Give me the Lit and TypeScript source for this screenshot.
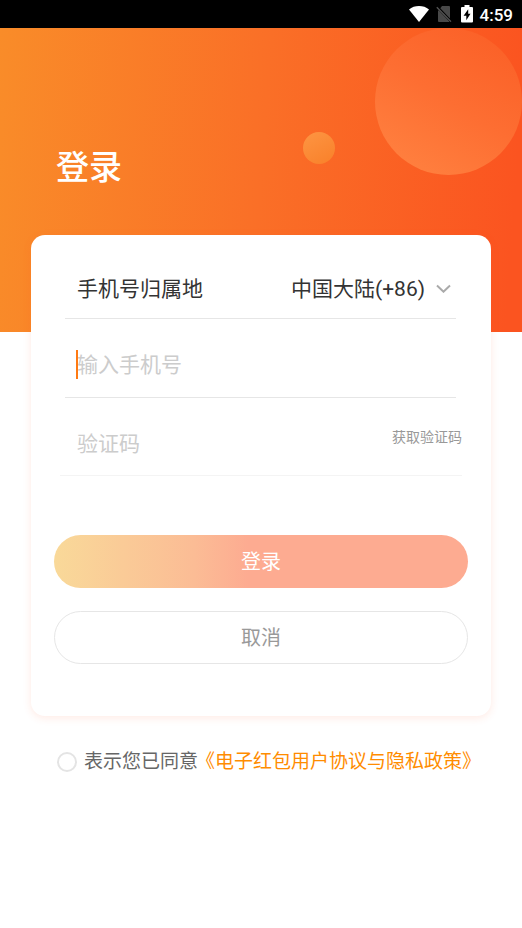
import { LitElement, html, css } from "lit";
import { customElement, state } from "lit/decorators.js";

@customElement("status-bar")
class StatusBar extends LitElement {
  static styles = css`
    :host {
      display: flex;
      align-items: center;
      justify-content: flex-end;
      height: 28px;
      padding-right: 9px;
      background: #000;
      color: #fff;
      font: 500 17px/28px Roboto, sans-serif;
    }
    .wifi {
      margin-right: 7px;
    }
    .sim {
      margin-right: 9px;
    }
    .battery {
      margin-right: 7px;
    }
    .time {
      padding-top: 1px;
    }
  `;

  render() {
    return html`
      <svg class="wifi" width="20" height="16" viewBox="0 0 20 16" aria-hidden="true">
        <path d="M0 3.4C2.8 1.2 6.2 0 10 0s7.2 1.2 10 3.4L10 16z" fill="#fff" />
      </svg>
      <svg class="sim" width="16" height="16" viewBox="0 0 16 16" aria-hidden="true">
        <path d="M6 0h7a1 1 0 0 1 1 1v11.5L4.3 2.2zM2.6 4.2 13.4 15.6 13 16H3a1 1 0 0 1-1-1V5z" fill="#484848" />
        <path d="M.8 1.2 15 15.6" stroke="#555" stroke-width="1.3" />
      </svg>
      <svg class="battery" width="12" height="18" viewBox="0 0 12 18" aria-hidden="true">
        <path d="M3.5 0h5v2H11a1 1 0 0 1 1 1v13.500a1 1 0 0 1-1 1H1a1 1 0 0 1-1-1V3a1 1 0 0 1 1-1h2.500z" fill="#fff" />
        <path d="M7.200 4.200 2.600 10.800h2.700v4.400L9.500 8.700H7.200z" fill="#000" />
      </svg>
      <span class="time">4:59</span>
    `;
  }
}

@customElement("app-root")
class AppRoot extends LitElement {
  @state() private agreed = false;

  static styles = css`
    :host {
      display: block;
      min-height: 100vh;
      background: #fff;
      color: #333;
      font: 21px/32px Roboto, "Noto Sans CJK SC", sans-serif;
    }
    * {
      box-sizing: border-box;
    }
    input,
    select,
    button {
      margin: 0;
      padding: 0;
      border: 0;
      background: none;
      color: inherit;
      font: inherit;
      outline: none;
    }
    button {
      cursor: pointer;
    }
    .hero {
      position: relative;
      height: 304px;
      padding: 116px 56px 0;
      overflow: hidden;
      background: linear-gradient(94deg, #f98c29, #fa6f27 50%, #fb5420 97%);
    }
    .title {
      margin: 0;
      color: #fff;
      font-size: 33px;
      font-weight: 500;
      line-height: 48px;
    }
    .bubble {
      position: absolute;
      border-radius: 50%;
    }
    .large {
      top: 0;
      right: 0;
      width: 147px;
      height: 147px;
      background: linear-gradient(32deg, #ff803f 10%, #fd6e32 50%, #fb6027 92%);
    }
    .small {
      top: 104px;
      right: 187px;
      width: 32px;
      height: 32px;
      background: linear-gradient(150deg, #fd9543, #f98029);
    }
    .card {
      position: relative;
      margin: -97px 31px 0;
      padding: 24px 23px 52px;
      border-radius: 14px;
      background: #fff;
      box-shadow: 0 2px 8px rgba(255, 80, 30, 0.12);
    }
    .row {
      display: flex;
      align-items: center;
      height: 79px;
      margin: 0 12px 0 11px;
      padding: 14px 0 0 12px;
      border-bottom: 1px solid #e6e6e6;
    }
    .region {
      justify-content: space-between;
      height: 60px;
      padding-top: 0;
    }
    .picker {
      position: relative;
      display: flex;
      align-items: center;
    }
    .picker select {
      height: 32px;
      padding-right: 30px;
      appearance: none;
    }
    .chevron {
      position: absolute;
      right: 5px;
      pointer-events: none;
    }
    .field {
      position: relative;
      flex: 1;
      display: flex;
      min-width: 0;
    }
    .field input {
      width: 100%;
      height: 32px;
      caret-color: #ff7a12;
    }
    .field input::placeholder {
      color: #ccc;
      opacity: 1;
    }
    .caret {
      position: absolute;
      top: 1px;
      left: -1px;
      width: 2px;
      height: 29px;
      background: #ff7a12;
    }
    .field:has(input:focus) .caret,
    .field:has(input:not(:placeholder-shown)) .caret {
      display: none;
    }
    .code {
      height: 78px;
      margin: 0 6px;
      padding-left: 17px;
      border-color: #f4f4f4;
    }
    .send {
      margin-bottom: 14px;
      color: #999;
      font-size: 14px;
      line-height: 20px;
    }
    .actions {
      display: grid;
      gap: 23px;
      margin-top: 59px;
    }
    .action {
      height: 53px;
      border-radius: 27px;
      font-size: 20px;
    }
    .submit {
      background: linear-gradient(90deg, #f9d999, #fbbc95 34%, #fdab91 47%);
      color: #fff;
    }
    .cancel {
      border: 1px solid #e6e6e6;
      color: #999;
    }
    .terms {
      display: flex;
      align-items: center;
      margin: 30px 31px 0 57px;
      color: #666;
      font-size: 19px;
      line-height: 32px;
      white-space: nowrap;
    }
    .agree {
      display: flex;
      align-items: center;
      gap: 7px;
    }
    .agree input {
      width: 20px;
      height: 20px;
      border: 2px solid #e4e4e4;
      border-radius: 50%;
      appearance: none;
    }
    .agree input:checked {
      border: 6px solid #ff8c00;
    }
    .policy {
      margin-left: -2px;
      color: #ff8c00;
      text-decoration: none;
    }
  `;

  render() {
    return html`
      <status-bar></status-bar>
      <header class="hero">
        <span class="bubble large"></span>
        <span class="bubble small"></span>
        <h1 class="title">登录</h1>
      </header>
      <form class="card" @submit=${(e: Event) => e.preventDefault()}>
        <div class="row region">
          <label for="region">手机号归属地</label>
          <span class="picker">
            <select id="region">
              <option>中国大陆(+86)</option>
            </select>
            <svg class="chevron" width="15" height="9" viewBox="0 0 15 9" aria-hidden="true">
              <path d="M1 1.500l6.500 6.200L14 1.500" fill="none" stroke="#aaa" stroke-width="2" />
            </svg>
          </span>
        </div>
        <div class="row">
          <span class="field">
            <input type="tel" placeholder="输入手机号" aria-label="输入手机号" />
            <span class="caret"></span>
          </span>
        </div>
        <div class="row code">
          <span class="field">
            <input inputmode="numeric" placeholder="验证码" aria-label="验证码" />
          </span>
          <button class="send" type="button">获取验证码</button>
        </div>
        <div class="actions">
          <button class="action submit" type="submit">登录</button>
          <button class="action cancel" type="button">取消</button>
        </div>
      </form>
      <footer class="terms">
        <label class="agree">
          <input
            type="checkbox"
            .checked=${this.agreed}
            @change=${(e: Event) => (this.agreed = (e.target as HTMLInputElement).checked)}
          />
          表示您已同意
        </label>
        <a class="policy" href="#policy">《电子红包用户协议与隐私政策》</a>
      </footer>
    `;
  }
}
